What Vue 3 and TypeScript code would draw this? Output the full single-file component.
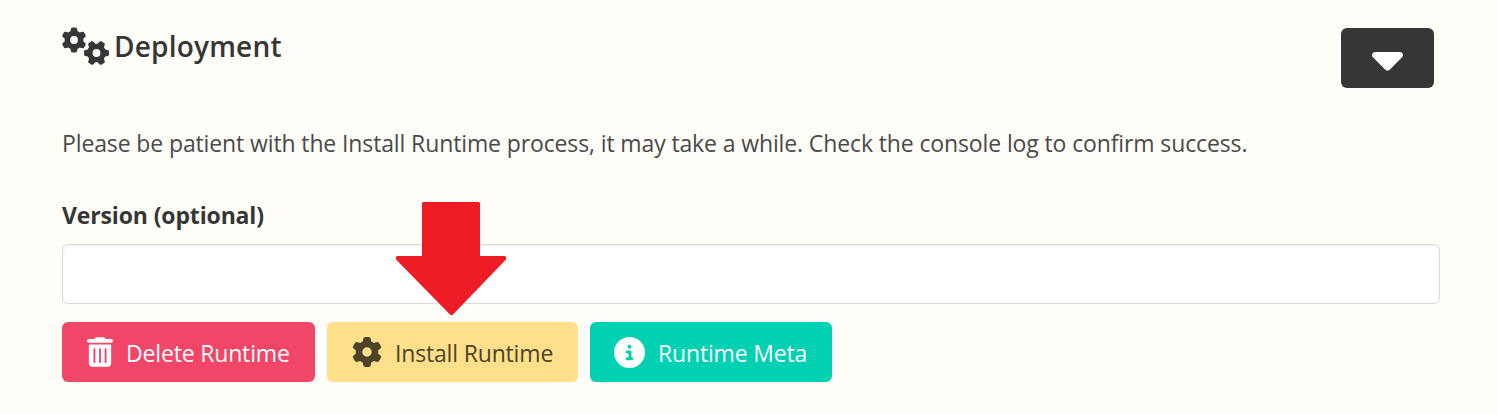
<script setup lang="ts">
import { ref } from 'vue'

interface Action {
  label: string
  kind: string
  path: string
  viewBox: string
}

const gear =
  'M495.9 166.6c3.2 8.7 .5 18.4-6.4 24.6l-43.3 39.4c1.1 8.3 1.7 16.8 1.7 25.4s-.6 17.1-1.7 25.4l43.3 39.4c6.9 6.2 9.6 15.9 6.4 24.6c-4.4 11.9-9.7 23.3-15.8 34.3l-4.7 8.1c-6.6 11-14 21.4-22.1 31.2c-5.9 7.2-15.7 9.6-24.5 6.8l-55.7-17.7c-13.4 10.3-28.2 18.9-44 25.4l-12.5 57.1c-2 9.1-9 16.3-18.2 17.8c-13.8 2.3-28 3.5-42.5 3.5s-28.7-1.2-42.5-3.5c-9.2-1.5-16.2-8.7-18.2-17.8l-12.5-57.1c-15.8-6.5-30.6-15.1-44-25.4L83.1 425.9c-8.8 2.8-18.6 .3-24.5-6.8c-8.1-9.8-15.5-20.2-22.1-31.2l-4.7-8.1c-6.1-11-11.4-22.4-15.8-34.3c-3.2-8.7-.5-18.4 6.4-24.6l43.3-39.4C64.6 273.1 64 264.6 64 256s.6-17.1 1.7-25.4L22.4 191.2c-6.9-6.2-9.6-15.9-6.4-24.6c4.4-11.9 9.7-23.3 15.8-34.3l4.7-8.1c6.6-11 14-21.4 22.1-31.2c5.9-7.2 15.7-9.6 24.5-6.8l55.7 17.7c13.4-10.3 28.2-18.9 44-25.4l12.5-57.1c2-9.1 9-16.3 18.2-17.8C227.3 1.2 241.5 0 256 0s28.7 1.2 42.5 3.5c9.2 1.5 16.2 8.7 18.2 17.8l12.5 57.1c15.8 6.5 30.6 15.1 44 25.4l55.7-17.7c8.8-2.8 18.6-.3 24.5 6.8c8.1 9.8 15.5 20.2 22.1 31.2l4.7 8.1c6.1 11 11.4 22.4 15.8 34.3zM256 336a80 80 0 1 0 0-160 80 80 0 1 0 0 160z'
const trash =
  'M135.2 17.7C140.6 6.8 151.7 0 163.8 0H284.2c12.1 0 23.2 6.8 28.6 17.7L320 32h96c17.7 0 32 14.3 32 32s-14.3 32-32 32H32C14.3 96 0 81.7 0 64S14.3 32 32 32h96l7.2-14.3zM32 128H416V448c0 35.3-28.7 64-64 64H96c-35.3 0-64-28.7-64-64V128zm96 64c-8.8 0-16 7.2-16 16V432c0 8.8 7.2 16 16 16s16-7.2 16-16V208c0-8.8-7.2-16-16-16zm96 0c-8.8 0-16 7.2-16 16V432c0 8.8 7.2 16 16 16s16-7.2 16-16V208c0-8.8-7.2-16-16-16zm96 0c-8.8 0-16 7.2-16 16V432c0 8.8 7.2 16 16 16s16-7.2 16-16V208c0-8.8-7.2-16-16-16z'
const info =
  'M256 512A256 256 0 1 0 256 0a256 256 0 1 0 0 512zM216 336h24V272H216c-13.3 0-24-10.7-24-24s10.7-24 24-24h48c13.3 0 24 10.7 24 24v88h8c13.3 0 24 10.7 24 24s-10.7 24-24 24H216c-13.3 0-24-10.7-24-24s10.7-24 24-24zm40-208a32 32 0 1 1 0 64 32 32 0 1 1 0-64z'

const actions: Action[] = [
  { label: 'Delete Runtime', kind: 'danger', path: trash, viewBox: '0 0 448 512' },
  { label: 'Install Runtime', kind: 'warning', path: gear, viewBox: '0 0 512 512' },
  { label: 'Runtime Meta', kind: 'primary', path: info, viewBox: '0 0 512 512' },
]

const version = ref('')
</script>

<template>
  <section class="panel">
    <header class="head">
      <h1 class="title">
        <svg class="gears" viewBox="0 0 48 40" aria-hidden="true">
          <path :d="gear" transform="translate(12 13) scale(.0488) translate(-256 -256)" />
          <path :d="gear" transform="translate(34.5 26) rotate(90) scale(.0488) translate(-256 -256)" />
        </svg>
        <span class="title-text">Deployment</span>
      </h1>
      <button class="toggle" type="button" aria-label="Toggle">
        <svg class="caret" viewBox="0 192 320 192">
          <path d="M137.4 374.6c12.5 12.5 32.8 12.5 45.3 0l128-128c9.2-9.2 11.9-22.9 6.9-34.9s-16.6-19.8-29.6-19.8L32 192c-12.9 0-24.6 7.8-29.6 19.8s-2.2 25.7 6.9 34.9l128 128z" />
        </svg>
      </button>
    </header>
    <p class="hint">Please be patient with the Install Runtime process, it may take a while. Check the console log to confirm success.</p>
    <label class="label" for="version">Version (optional)</label>
    <input id="version" v-model="version" class="input" type="text" />
    <div class="actions">
      <button v-for="a in actions" :key="a.label" type="button" class="btn" :class="a.kind">
        <svg class="icon" :viewBox="a.viewBox" aria-hidden="true"><path :d="a.path" /></svg>
        <span class="btn-text">{{ a.label }}</span>
      </button>
    </div>
    <svg class="arrow" viewBox="0 0 110 114" aria-hidden="true">
      <path d="M27 0H83L84 1V54H109L110 55V57.5L56.5 113H54.5L0 57.5V55L1 54H26V1Z" />
    </svg>
  </section>
</template>

<style>
html,
body {
  background: #fffdf8;
}
</style>

<style scoped>
.panel {
  position: relative;
  box-sizing: border-box;
  width: 1498px;
  height: 414px;
  padding: 28px 58px 0 62px;
  background: #fffdf8;
  color: #363636;
  font-family: "Open Sans", "Noto Sans", sans-serif;
  font-size: 23px;
  white-space: nowrap;
}
.head {
  display: flex;
  justify-content: space-between;
  height: 60px;
  padding-right: 6px;
}
.title {
  display: flex;
  margin: 0;
  height: 36px;
  line-height: 36px;
  font-size: 28px;
  font-weight: 600;
}
.gears {
  width: 48px;
  height: 40px;
  margin: -1px 4px 0 0;
  fill: #363636;
}
.title-text {
  letter-spacing: 0.2px;
}
.toggle {
  display: flex;
  justify-content: center;
  width: 93px;
  height: 60px;
  padding: 24px 0 0;
  border: 0;
  border-radius: 6px;
  background: #363636;
}
.caret {
  width: 31px;
  height: 18.6px;
  fill: #fff;
}
.hint {
  margin: 37px 0 0;
  height: 36px;
  line-height: 36px;
  color: #4a4a4a;
  letter-spacing: -0.122px;
}
.label {
  display: block;
  margin-top: 36px;
  height: 36px;
  line-height: 36px;
  font-weight: 700;
  letter-spacing: -0.14px;
}
.input {
  display: block;
  box-sizing: border-box;
  width: 100%;
  height: 60px;
  margin-top: 11px;
  padding: 0 16px;
  border: 1px solid #dbdbdb;
  border-radius: 6px;
  background: #fff;
  box-shadow: inset 0 1px 3px rgba(10, 10, 10, 0.07);
  font: inherit;
  outline: 0;
}
.actions {
  display: flex;
  gap: 12px;
  margin-top: 18px;
}
.btn {
  display: flex;
  box-sizing: border-box;
  height: 60px;
  padding: 15px 0 0 25px;
  border: 0;
  border-radius: 6px;
  font: inherit;
  text-align: left;
  color: #fff;
}
.icon {
  flex: none;
  height: 30px;
  fill: currentColor;
}
.btn-text {
  height: 32px;
  line-height: 32px;
  letter-spacing: -0.17px;
}
.danger {
  width: 253px;
  background: #f14668;
}
.danger .icon {
  width: 26px;
  margin-right: 13px;
}
.warning {
  width: 251px;
  background: #ffe08a;
  color: #4d4329;
}
.warning .icon {
  width: 30px;
  margin-right: 13px;
}
.primary {
  width: 242px;
  padding-left: 24px;
  background: #00d1b2;
}
.primary .icon {
  width: 31px;
  height: 31px;
  margin: -0.5px 13px 0 0;
}
.arrow {
  position: absolute;
  left: 396px;
  top: 202px;
  width: 110px;
  height: 114px;
  fill: #ed1c24;
}
</style>
